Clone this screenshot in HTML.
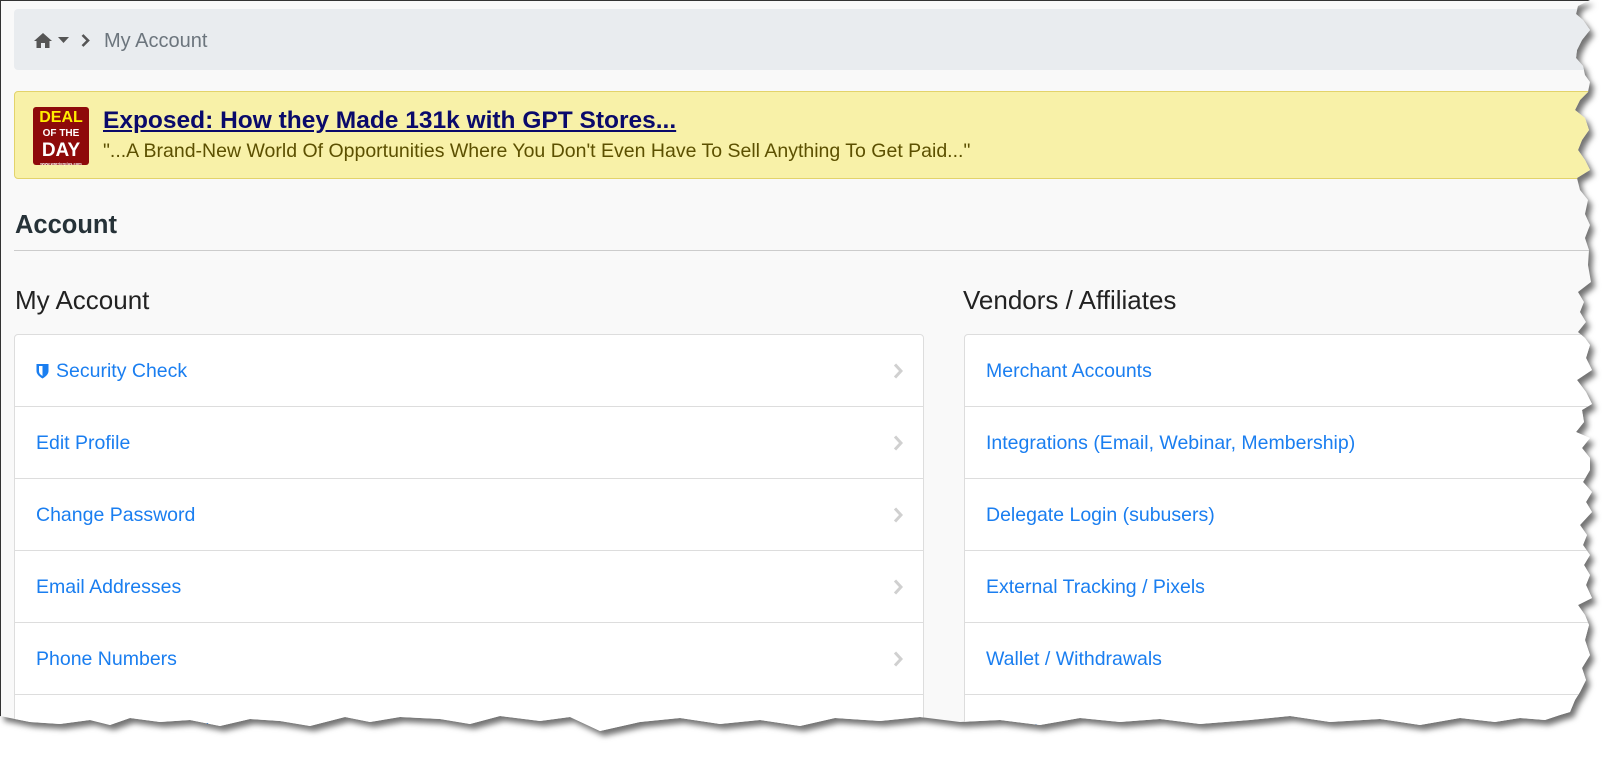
<!DOCTYPE html>
<html><head><meta charset="utf-8"><style>
*{box-sizing:border-box;margin:0;padding:0}
body{width:1619px;height:760px;background:#fff;overflow:hidden;font-family:"Liberation Sans",sans-serif;position:relative}
#wrap{position:absolute;left:0;top:0;width:1619px;height:760px;filter:drop-shadow(4px 5px 3px rgba(0,0,0,.55))}
#page{position:absolute;left:0;top:0;width:1619px;height:760px;background:#f9f9f9;border-left:1px solid #333;border-top:1px solid #333;
clip-path:polygon(0 0,1590px 0,1578px 6px,1576px 14px,1583px 20px,1590px 30px,1582px 40px,1577px 50px,1576px 58px,1583px 66px,1585px 75px,1590px 82px,1588px 92px,1580px 100px,1575px 110px,1585px 118px,1589px 130px,1582px 140px,1578px 150px,1585px 160px,1590px 170px,1577px 178px,1580px 190px,1588px 200px,1585px 214px,1590px 225px,1585px 238px,1589px 250px,1588px 265px,1591px 282px,1578px 292px,1584px 302px,1580px 312px,1586px 322px,1578px 332px,1585px 338px,1590px 345px,1586px 358px,1592px 370px,1577px 380px,1586px 392px,1592px 404px,1582px 410px,1584px 422px,1576px 432px,1590px 438px,1582px 448px,1590px 458px,1590px 470px,1583px 482px,1592px 492px,1586px 502px,1592px 512px,1580px 525px,1587px 535px,1583px 545px,1590px 555px,1584px 565px,1590px 575px,1586px 585px,1592px 598px,1578px 605px,1585px 615px,1589px 625px,1585px 640px,1590px 655px,1582px 668px,1586px 680px,1580px 692px,1575px 700px,1570px 712px,1560px 715px,1545px 720px,1520px 718px,1495px 722px,1460px 718px,1420px 725px,1380px 719px,1330px 722px,1290px 716px,1250px 720px,1200px 724px,1160px 719px,1120px 722px,1080px 718px,1040px 725px,1000px 720px,960px 722px,920px 717px,880px 721px,835px 718px,800px 726px,760px 720px,720px 724px,680px 718px,640px 722px,600px 731px,570px 717px,540px 721px,500px 716px,470px 724px,440px 719px,400px 717px,370px 722px,345px 717px,310px 726px,280px 721px,250px 719px,220px 726px,190px 720px,160px 722px,130px 718px,110px 725px,90px 720px,60px 724px,30px 722px,10px 718px,0 716px)}
.bc{position:absolute;left:13px;top:8px;width:1600px;height:61px;background:#e9ecef;border-radius:4px}
.bc .t{position:absolute;left:90px;top:21px;font-size:20px;color:#6c757d}
.deal{position:absolute;left:13px;top:90px;width:1600px;height:88px;background:#f8f1a8;border:1px solid #e3d36b;border-radius:4px}
.badge{position:absolute;left:18px;top:15px;width:56px;height:58px;background:#8e0a0a;border-radius:3px;text-align:center;font-weight:bold;line-height:1}
.deal a{position:absolute;left:88px;top:15px;font-size:24.5px;font-weight:bold;color:#0a0a6b;text-decoration:underline}
.deal .s{position:absolute;left:88px;top:48px;font-size:19.5px;color:#5c5000}
h2{position:absolute;left:14px;top:210px;font-size:25.5px;font-weight:bold;color:#263238}
.hr{position:absolute;left:13px;top:249px;width:1600px;height:1px;background:#ccc}
h3{position:absolute;top:284px;font-size:26px;font-weight:normal;color:#222}
.panel{position:absolute;top:333px;height:420px;background:#fff;border:1px solid #ddd;border-radius:4px}
.row{height:72px;border-bottom:1px solid #ddd;position:relative}
.row span{position:absolute;left:21px;top:25px;font-size:19.5px;color:#1a7ef0}
.row svg.c{position:absolute;right:20px;top:28px}
</style></head><body>
<div id="wrap"><div id="page">
<div class="bc">
<svg style="position:absolute;left:20px;top:24px" width="18" height="15" viewBox="0 0 18 15"><path d="M9 0 L18 8 L15.5 8 L15.5 15 L11 15 L11 10 L7 10 L7 15 L2.5 15 L2.5 8 L0 8 Z" fill="#555"/></svg>
<svg style="position:absolute;left:44px;top:28px" width="11" height="7"><path d="M0 0H11L5.5 6Z" fill="#555"/></svg>
<svg style="position:absolute;left:67px;top:25px" width="9" height="13"><path d="M1.5 1L7 6.5L1.5 12" stroke="#555" stroke-width="2.6" fill="none"/></svg>
<span class="t">My Account</span></div>
<div class="deal">
<div class="badge"><div style="color:#ffed00;font-size:16px;padding-top:3px">DEAL</div><div style="color:#fff;font-size:10px;margin-top:3px">OF THE</div><div style="color:#fff;font-size:19px;margin-top:2px">DAY</div><div style="color:#fff;font-size:4px;margin-top:2px">www.warriorplus.com</div></div>
<a>Exposed: How they Made 131k with GPT Stores...</a>
<div class="s">"...A Brand-New World Of Opportunities Where You Don't Even Have To Sell Anything To Get Paid..."</div>
</div>
<h2>Account</h2><div class="hr"></div>
<h3 style="left:14px">My Account</h3>
<h3 style="left:962px">Vendors / Affiliates</h3>
<div class="panel" style="left:13px;width:910px">
<div class="row"><svg style="position:absolute;left:21px;top:28px" width="13" height="16" viewBox="0 0 13 16"><path d="M0.5 1H12.5V8C12.5 11 10 13.5 6.5 15.5C3 13.5 0.5 11 0.5 8Z" fill="#1a7ef0"/><path d="M6.5 3V13C4 11.5 3 10 3 8V3Z" fill="#fff"/></svg><span style="left:41px">Security Check</span><svg class="c" width="10" height="16"><path d="M2 1.5L8 8L2 14.5" stroke="#d0d0d0" stroke-width="3" fill="none"/></svg></div>
<div class="row"><span>Edit Profile</span><svg class="c" width="10" height="16"><path d="M2 1.5L8 8L2 14.5" stroke="#d0d0d0" stroke-width="3" fill="none"/></svg></div>
<div class="row"><span>Change Password</span><svg class="c" width="10" height="16"><path d="M2 1.5L8 8L2 14.5" stroke="#d0d0d0" stroke-width="3" fill="none"/></svg></div>
<div class="row"><span>Email Addresses</span><svg class="c" width="10" height="16"><path d="M2 1.5L8 8L2 14.5" stroke="#d0d0d0" stroke-width="3" fill="none"/></svg></div>
<div class="row"><span>Phone Numbers</span><svg class="c" width="10" height="16"><path d="M2 1.5L8 8L2 14.5" stroke="#d0d0d0" stroke-width="3" fill="none"/></svg></div>
<div class="row"><span>Two-Factor Authentication</span></div>
</div>
<div class="panel" style="left:963px;width:660px">
<div class="row"><span>Merchant Accounts</span></div>
<div class="row"><span>Integrations (Email, Webinar, Membership)</span></div>
<div class="row"><span>Delegate Login (subusers)</span></div>
<div class="row"><span>External Tracking / Pixels</span></div>
<div class="row"><span>Wallet / Withdrawals</span></div>
<div class="row"><span>Affiliate Settings</span></div>
</div>
</div></div>
</body></html>
